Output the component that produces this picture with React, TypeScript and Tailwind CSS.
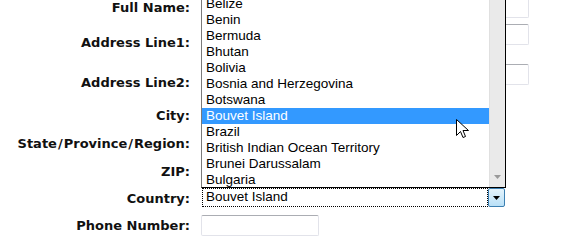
import React from "react";

const countries = [
  "Belize",
  "Benin",
  "Bermuda",
  "Bhutan",
  "Bolivia",
  "Bosnia and Herzegovina",
  "Botswana",
  "Bouvet Island",
  "Brazil",
  "British Indian Ocean Territory",
  "Brunei Darussalam",
  "Bulgaria",
];

function Label({ text }: { text: string }) {
  const parts = text.split("/");
  return (
    <div className="w-[190px] shrink-0 text-right font-bold text-[13px] text-[#111] leading-none [font-family:'DejaVu_Sans',Verdana,sans-serif]">
      {parts.map((p, i) => (
        <React.Fragment key={i}>
          {i > 0 && <span className="mx-[1px]">/</span>}
          {p}
        </React.Fragment>
      ))}
    </div>
  );
}

function TextBox({ w }: { w: string }) {
  return (
    <div
      className={`${w} h-[21px] rounded-[2px] border border-[#e2e3ea] border-t-[#abadb3] bg-white`}
    />
  );
}

export default function App() {
  return (
    <div className="relative h-[242px] w-[570px] overflow-hidden bg-white [font-family:'Liberation_Sans',Arial,sans-serif]">
      <div className="mt-[-4px] flex flex-col">
        <div className="flex h-[22px] items-center gap-[11px]">
          <Label text="Full Name:" />
          <TextBox w="w-[328px]" />
        </div>
        <div className="mt-[6px] flex h-[36px] items-center gap-[11px]">
          <Label text="Address Line1:" />
          <div className="self-start">
            <TextBox w="w-[328px]" />
          </div>
        </div>
        <div className="mt-[4px] flex h-[36px] items-center gap-[11px]">
          <Label text="Address Line2:" />
          <div className="self-start">
            <TextBox w="w-[328px]" />
          </div>
        </div>
        <div className="mt-[4px] flex h-[22px] items-center gap-[11px]">
          <Label text="City:" />
          <TextBox w="w-[118px]" />
        </div>
        <div className="mt-[6px] flex h-[22px] items-center gap-[11px]">
          <Label text="State/Province/Region:" />
          <TextBox w="w-[118px]" />
        </div>
        <div className="mt-[6px] flex h-[22px] items-center gap-[11px]">
          <Label text="ZIP:" />
          <TextBox w="w-[118px]" />
        </div>
        <div className="mt-[6px] flex h-[20px] items-center gap-[12px]">
          <Label text="Country:" />
          <div className="flex h-[19px] w-[303px] self-start">
            <div className="flex flex-1 items-center border border-dotted border-black pl-[3px] text-[13.5px] text-black">
              Bouvet Island
            </div>
            <div className="flex w-[17px] items-center justify-center rounded-[2px] border border-[#3c7fb1] bg-gradient-to-b from-[#e5f4fc] to-[#b9e0f7]">
              <svg width="7" height="4" viewBox="0 0 7 4">
                <path d="M0 0H7L3.5 4Z" fill="#000" />
              </svg>
            </div>
          </div>
        </div>
        <div className="mt-[6px] flex h-[22px] items-center gap-[11px]">
          <Label text="Phone Number:" />
          <TextBox w="w-[118px]" />
        </div>
      </div>

      {/* Open dropdown list */}
      <div className="absolute left-[201px] top-[-6px] flex h-[194px] w-[305px] border border-black border-l-[#7a7a7a] bg-white">
        <div className="flex-1 pt-[1px]">
          {countries.map((c) => (
            <div
              key={c}
              className={`h-[16px] pl-[4px] text-[13.5px] leading-[16px] ${
                c === "Bouvet Island" ? "bg-[#3399ff] text-white" : "text-black"
              }`}
            >
              {c}
            </div>
          ))}
        </div>
        <div className="relative w-[16px] bg-[#eaeaea] border-l border-[#e0e0e0]">
          <svg
            className="absolute bottom-[8px] left-[4px]"
            width="7"
            height="4"
            viewBox="0 0 7 4"
          >
            <path d="M0 0H7L3.5 4Z" fill="#9a9a9a" />
          </svg>
        </div>
      </div>

      {/* Mouse cursor */}
      <svg
        className="absolute left-[456px] top-[119px]"
        width="13"
        height="20"
        viewBox="0 0 13 20"
      >
        <path
          d="M0.5 0.5 L0.5 16.5 L4.5 12.5 L7 18.5 L9.5 17.5 L7 11.5 L12.5 11.5 Z"
          fill="#fff"
          stroke="#000"
          strokeWidth="1"
          strokeLinejoin="miter"
        />
      </svg>
    </div>
  );
}
